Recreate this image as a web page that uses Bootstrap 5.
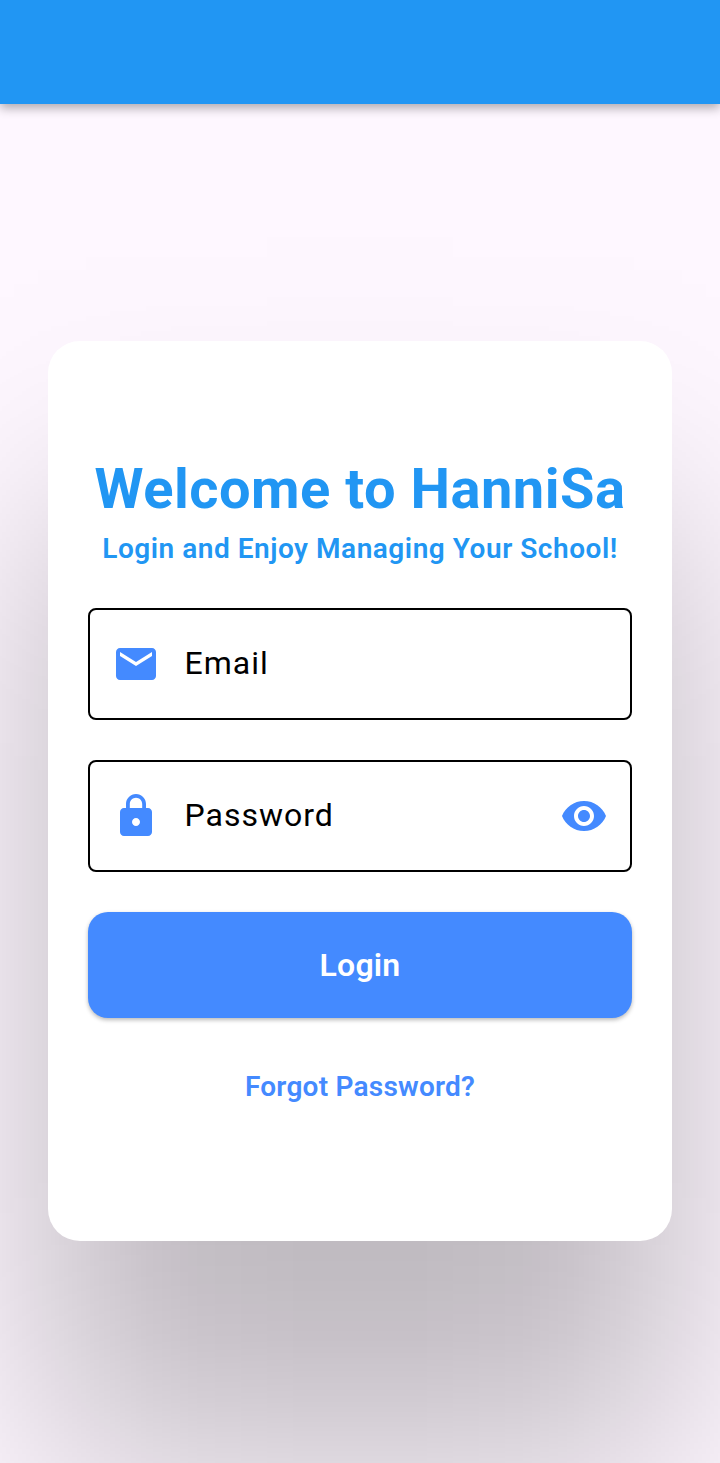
<!DOCTYPE html>
<html lang="en">
<head>
<meta charset="utf-8">
<meta name="viewport" content="width=device-width, initial-scale=1">
<title>HanniSa Login</title>
<link href="https://cdn.jsdelivr.net/npm/bootstrap@5.3.0/dist/css/bootstrap.min.css" rel="stylesheet">
<style>
body{font-family:Roboto,sans-serif;background:#fef7ff;height:1463px;overflow:hidden;position:relative}
.app-bar{height:104px;background:#2196f3;box-shadow:0 4px 10px rgba(0,0,0,.32);z-index:2}
/* very wide, soft elevation shadow: horizontal falloff multiplied by vertical falloff */
body::before{content:"";position:absolute;inset:0;
background:linear-gradient(90deg,rgba(0,0,0,.079) -8.5px,rgba(0,0,0,.1275) 44px,rgba(0,0,0,.176) 96.5px,rgba(0,0,0,.2145) 149px,rgba(0,0,0,.238) 201.5px,rgba(0,0,0,.249) 254px,rgba(0,0,0,.2535) 306.5px,rgba(0,0,0,.2545) 360px,rgba(0,0,0,.2535) 413.5px,rgba(0,0,0,.249) 466px,rgba(0,0,0,.238) 518.5px,rgba(0,0,0,.2145) 571px,rgba(0,0,0,.176) 623.5px,rgba(0,0,0,.1275) 676px,rgba(0,0,0,.079) 728.5px);
--fall:linear-gradient(180deg,transparent 196px,rgba(0,0,0,.006) 250px,rgba(0,0,0,.023) 304px,rgba(0,0,0,.067) 358px,rgba(0,0,0,.159) 412px,rgba(0,0,0,.309) 466px,rgba(0,0,0,.5) 520px,rgba(0,0,0,.691) 574px,rgba(0,0,0,.841) 628px,rgba(0,0,0,.933) 682px,rgba(0,0,0,.977) 736px,rgba(0,0,0,.994) 790px,#000 844px,#000 1100px,rgba(0,0,0,.994) 1160px,rgba(0,0,0,.977) 1220px,rgba(0,0,0,.933) 1280px,rgba(0,0,0,.841) 1340px,rgba(0,0,0,.691) 1400px,rgba(0,0,0,.5) 1460px,rgba(0,0,0,.309) 1520px);
-webkit-mask-image:var(--fall);mask-image:var(--fall)}
.stage{padding:237px 48px 0;height:1359px}
.login-card{height:900px;border-radius:32px;border:0;padding:116px 40px 0}
.title{font-size:56px;line-height:64px;font-weight:700;color:#2196f3;letter-spacing:.5px;white-space:nowrap}
.subtitle{font-size:28px;line-height:40px;font-weight:600;color:#2196f3;letter-spacing:.53px;white-space:nowrap;margin:8px 0 39px}
.field{height:112px;border:2px solid #000;border-radius:8px;padding:0 22px;margin-bottom:40px}
.field label{font-size:32px;line-height:48px;color:#000;letter-spacing:1px;margin-left:24.5px;padding-bottom:2px}
.btn-login{height:106px;border-radius:20px;background:#448aff;color:#fff;font-size:32px;font-weight:600;letter-spacing:.2px;box-shadow:0 2px 4px rgba(0,0,0,.28)}
.forgot{font-size:28px;line-height:40px;font-weight:600;letter-spacing:.23px;color:#448aff;margin-top:49px}
</style>
<script src="https://cdn.jsdelivr.net/npm/bootstrap@5.3.0/dist/js/bootstrap.bundle.min.js"></script>
</head>
<body>
<header class="app-bar position-relative"></header>
<main class="stage">
<form class="card login-card">
<h1 class="title text-center mb-0">Welcome to HanniSa</h1>
<p class="subtitle text-center">Login and Enjoy Managing Your School!</p>
<div class="field d-flex align-items-center">
<svg width="48" height="48" viewBox="0 0 24 24" fill="#448aff"><path d="M20 4H4c-1.100 0-1.990.9-1.990 2L2 18c0 1.100.9 2 2 2h16c1.100 0 2-.9 2-2V6c0-1.100-.9-2-2-2zm0 4l-8 5-8-5V6l8 5 8-5v2z"/></svg>
<label>Email</label></div>
<div class="field d-flex align-items-center">
<svg width="48" height="48" viewBox="0 0 24 24" fill="#448aff"><path d="M18 8h-1V6c0-2.760-2.240-5-5-5S7 3.240 7 6v2H6c-1.100 0-2 .9-2 2v10c0 1.100.9 2 2 2h12c1.100 0 2-.9 2-2V10c0-1.100-.9-2-2-2zm-6 9c-1.100 0-2-.9-2-2s.9-2 2-2 2 .9 2 2-.9 2-2 2zm3.100-9H8.900V6c0-1.710 1.390-3.100 3.100-3.100s3.100 1.390 3.100 3.100v2z"/></svg>
<label>Password</label>
<svg class="ms-auto" width="48" height="48" viewBox="0 0 24 24" fill="#448aff"><path d="M12 4.500C7 4.500 2.730 7.610 1 12c1.730 4.390 6 7.500 11 7.500s9.270-3.110 11-7.500c-1.730-4.390-6-7.500-11-7.500zM12 17c-2.760 0-5-2.240-5-5s2.240-5 5-5 5 2.240 5 5-2.240 5-5 5zm0-8c-1.660 0-3 1.340-3 3s1.340 3 3 3 3-1.340 3-3-1.340-3-3-3z"/></svg></div>
<button type="button" class="btn btn-login w-100">Login</button>
<a class="forgot text-center text-decoration-none">Forgot Password?</a>
</form>
</main>
</body>
</html>
